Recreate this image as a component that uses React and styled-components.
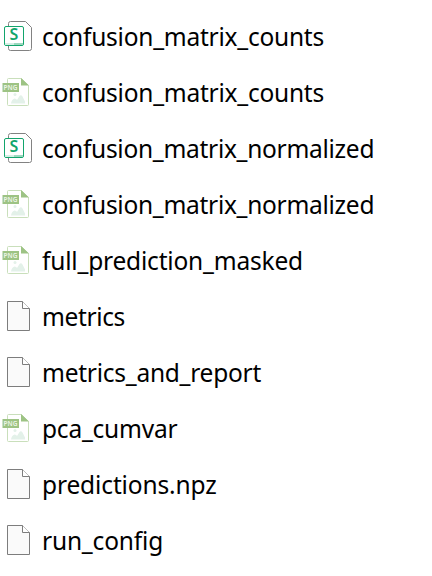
import React from 'react';
import styled, { createGlobalStyle } from 'styled-components';

const GlobalStyle = createGlobalStyle`
  body {
    margin: 0;
    background: #fff;
  }
`;

const FileList = styled.ul`
  margin: 0;
  padding: 9px 0 0;
  list-style: none;
  height: 576px;
  box-sizing: border-box;
  overflow: hidden;
`;

const FileRow = styled.li`
  display: flex;
  align-items: center;
  height: 56px;
`;

const Icon = styled.svg`
  flex: none;
  width: 36px;
  height: 36px;
`;

const IconLabel = styled.text`
  font-family: 'Noto Sans', sans-serif;
  font-size: ${props => props.$size}px;
  font-weight: ${props => props.$weight};
`;

const FileName = styled.span`
  margin-left: 6px;
  color: #000;
  font-family: 'Noto Sans', 'Open Sans', sans-serif;
  font-size: 24.5px;
  line-height: 34px;
  letter-spacing: ${props => props.$spacing}px;
  white-space: nowrap;
`;

const SheetIcon = () => (
  <Icon viewBox="0 0 36 36">
    <path
      d="M10.5 2.5H25.5L31.5 8.5V29.5Q31.5 31.5 29.5 31.5H10.5Q8.5 31.5 8.5 29.5V4.5Q8.5 2.5 10.5 2.5Z"
      fill="#fff"
      stroke="#828282"
    />
    <rect x="4.5" y="7.5" width="19" height="19" rx="1.5" fill="#fff" stroke="#12a56c" />
    <path d="M5 24H14V26H5Z" fill="#d5efe4" />
    <path d="M14 24H23V26H14Z" fill="#9bd8be" />
    <IconLabel x="14" y="21" textAnchor="middle" fill="#12a56c" $size={16} $weight={600}>
      S
    </IconLabel>
  </Icon>
);

const PngIcon = () => (
  <Icon viewBox="0 0 36 36">
    <path
      d="M8.5 3.5H21.5L28.5 10.5V29.5Q28.5 30.5 27.5 30.5H8.5Q7.5 30.5 7.5 29.5V4.5Q7.5 3.5 8.5 3.5Z"
      fill="#fff"
      stroke="#c9dfbb"
    />
    <path d="M21 3L29 10.5H21Z" fill="#9dc384" />
    <circle cx="15" cy="19.5" r="1.5" fill="#e3f1e9" />
    <path
      d="M11 28.5Q11.5 24.5 14.5 23.5Q16.5 23.5 17 25L19.5 21Q21 19.5 22.5 21.5L25 26.5L25 28.5Z"
      fill="#e3f1e9"
    />
    <rect x="2.5" y="8" width="16.5" height="9" fill="#9dc384" />
    <IconLabel x="10.5" y="15" textAnchor="middle" fill="#edf5e8" $size={6.5} $weight={600}>
      PNG
    </IconLabel>
  </Icon>
);

const BlankIcon = () => (
  <Icon viewBox="0 0 36 36">
    <path d="M7.5 2.5H22.5L29.5 9.5V31.5H7.5Z" fill="#fafafa" stroke="#7d7d7d" />
    <path d="M22.5 2.5V9.5H29.5" fill="#fff" stroke="#7d7d7d" />
  </Icon>
);

const icons = { sheet: SheetIcon, png: PngIcon, blank: BlankIcon };

const files = [
  { name: 'confusion_matrix_counts', type: 'sheet', spacing: -0.24 },
  { name: 'confusion_matrix_counts', type: 'png', spacing: -0.24 },
  { name: 'confusion_matrix_normalized', type: 'sheet', spacing: -0.28 },
  { name: 'confusion_matrix_normalized', type: 'png', spacing: -0.28 },
  { name: 'full_prediction_masked', type: 'png', spacing: -0.19 },
  { name: 'metrics', type: 'blank', spacing: -0.36 },
  { name: 'metrics_and_report', type: 'blank', spacing: -0.25 },
  { name: 'pca_cumvar', type: 'png', spacing: -0.22 },
  { name: 'predictions.npz', type: 'blank', spacing: -0.13 },
  { name: 'run_config', type: 'blank', spacing: -0.18 },
];

const App = () => (
  <>
    <GlobalStyle />
    <FileList>
      {files.map(({ name, type, spacing }, i) => {
        const FileIcon = icons[type];
        return (
          <FileRow key={i}>
            <FileIcon />
            <FileName $spacing={spacing}>{name}</FileName>
          </FileRow>
        );
      })}
    </FileList>
  </>
);

export default App;
